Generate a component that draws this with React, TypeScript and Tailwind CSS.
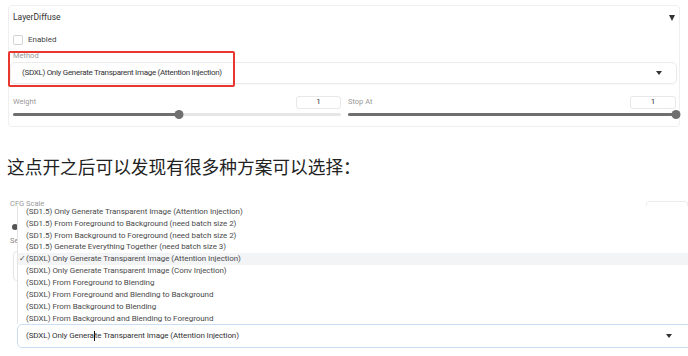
import React from "react"

const ui = { fontFamily: '"Roboto", "Noto Sans", sans-serif' }

const options = [
  "(SD1.5) Only Generate Transparent Image (Attention Injection)",
  "(SD1.5) From Foreground to Background (need batch size 2)",
  "(SD1.5) From Background to Foreground (need batch size 2)",
  "(SD1.5) Generate Everything Together (need batch size 3)",
  "(SDXL) Only Generate Transparent Image (Attention Injection)",
  "(SDXL) Only Generate Transparent Image (Conv Injection)",
  "(SDXL) From Foreground to Blending",
  "(SDXL) From Foreground and Blending to Background",
  "(SDXL) From Background to Blending",
  "(SDXL) From Background and Blending to Foreground",
]

function Caret() {
  return (
    <svg width="6" height="4" viewBox="0 0 6 4">
      <path d="M0 0 L6 0 L3 4 Z" fill="#333" />
    </svg>
  )
}

function Slider({ pct }: { pct: number }) {
  return (
    <div className="relative h-[9px] flex items-center">
      <div className="h-[3px] w-full rounded-full bg-[#e6e6e6]" />
      <div className="absolute left-0 h-[3px] rounded-full bg-[#6f6f6f]" style={{ width: `${pct}%` }} />
      <div
        className="absolute w-[9px] h-[9px] rounded-full bg-[#6f6f6f] -translate-x-1/2"
        style={{ left: `${pct}%` }}
      />
    </div>
  )
}

function NumBox({ w }: { w: string }) {
  return (
    <div className={`${w} h-[13px] border border-[#e8e8e8] rounded-[3px] flex items-center justify-center text-[8px] text-[#333]`}>
      1
    </div>
  )
}

export default function App() {
  return (
    <div className="w-[688px] h-[356px] bg-white overflow-hidden relative" style={ui}>
      {/* first screenshot */}
      <div className="pt-[5px] pl-[8px] pr-[8px]">
        <div className="relative w-[672px] h-[122px] border border-[#efefef] rounded-[4px]">
          <div className="h-[23px] flex items-center justify-between pl-[4px] pr-[4px]">
            <span className="text-[8.5px] text-[#333]">LayerDiffuse</span>
            <svg width="6" height="6" viewBox="0 0 6 6">
              <path d="M0 0 L6 0 L3 6 Z" fill="#333" />
            </svg>
          </div>
          <div className="h-[22px] flex items-center gap-[5px] pl-[4px]">
            <div className="w-[10px] h-[10px] border border-[#d4d4d4] rounded-[2px]" />
            <span className="text-[8px] text-[#444]">Enabled</span>
          </div>
          <div className="h-[10px] flex items-center pl-[4px] text-[7.5px] text-[#9a9a9a]">Method</div>
          <div className="mt-[1px] ml-[1px] w-[667px] h-[22px] border border-[#ebebeb] rounded-[5px] flex items-center justify-between pl-[11px] pr-[14px] shadow-[0_1px_2px_rgba(0,0,0,0.04)]">
            <span className="text-[8px] text-[#333] tracking-[-0.3px]">
              (SDXL) Only Generate Transparent Image (Attention Injection)
            </span>
            <Caret />
          </div>
          <div className="mt-[11px] pl-[4px] pr-[3px] flex gap-[7px]">
            <div className="flex-1">
              <div className="flex items-center justify-between h-[14px]">
                <span className="text-[7.5px] text-[#9a9a9a]">Weight</span>
                <NumBox w="w-[45px]" />
              </div>
              <div className="mt-[1px]">
                <Slider pct={50.5} />
              </div>
            </div>
            <div className="flex-1">
              <div className="flex items-center justify-between h-[14px]">
                <span className="text-[7.5px] text-[#9a9a9a]">Stop At</span>
                <NumBox w="w-[46px]" />
              </div>
              <div className="mt-[1px]">
                <Slider pct={100} />
              </div>
            </div>
          </div>
          {/* red annotation */}
          <div className="absolute left-[-1px] top-[45px] w-[227px] h-[36px] border-2 border-[#e8372f] rounded-[2px]" />
        </div>
      </div>

      {/* article text */}
      <p
        className="mt-[27px] pl-[7px] text-[17.7px] leading-[24px] text-[#222]"
        style={{ fontFamily: '"Noto Sans CJK SC", sans-serif' }}
      >
        这点开之后可以发现有很多种方案可以选择：
      </p>

      {/* second screenshot */}
      <div className="relative mt-[21px] h-[160px]">
        <div className="flex justify-between pl-[10px]">
          <span className="text-[7.5px] leading-[10px] text-[#9a9a9a]">CFG Scale</span>
          <div className="w-[42px] h-[12px] mt-[2px] border border-[#ececec] rounded-[3px]" />
        </div>
        <div className="pl-[12px] mt-[11px]">
          <div className="w-[6px] h-[6px] rounded-full bg-[#555]" />
        </div>
        <div className="pl-[10px] mt-[5px] text-[7.5px] text-[#888]">Se</div>
        <div className="ml-[13px] mt-[5px] h-[30px] border border-[#e6e6e6] rounded-[4px]" />

        {/* open dropdown list */}
        <div className="absolute left-[17px] right-0 top-[7px] bg-white border-l border-[#e4e4e4]">
          {options.map((o, i) => (
            <div
              key={o}
              className={`h-[11.85px] flex items-center text-[8px] text-[#4a4a4a] tracking-[-0.05px] ${
                i === 4 ? "bg-[#f3f4f6]" : ""
              }`}
            >
              <span className="w-[8px] text-center text-[8px]">{i === 4 ? "✓" : ""}</span>
              <span>{o}</span>
            </div>
          ))}
        </div>

        <div className="absolute left-[17px] right-[-4px] top-[125px] h-[24px] border border-[#cbdff2] rounded-[5px] bg-white flex items-center justify-between pl-[8px] pr-[19px]">
          <span className="text-[8px] text-[#333] tracking-[-0.1px] flex items-center">
            (SDXL) Only Genera
            <span className="inline-block w-[1px] h-[10px] bg-[#111]" />
            te Transparent Image (Attention Injection)
          </span>
          <Caret />
        </div>
      </div>
    </div>
  )
}
